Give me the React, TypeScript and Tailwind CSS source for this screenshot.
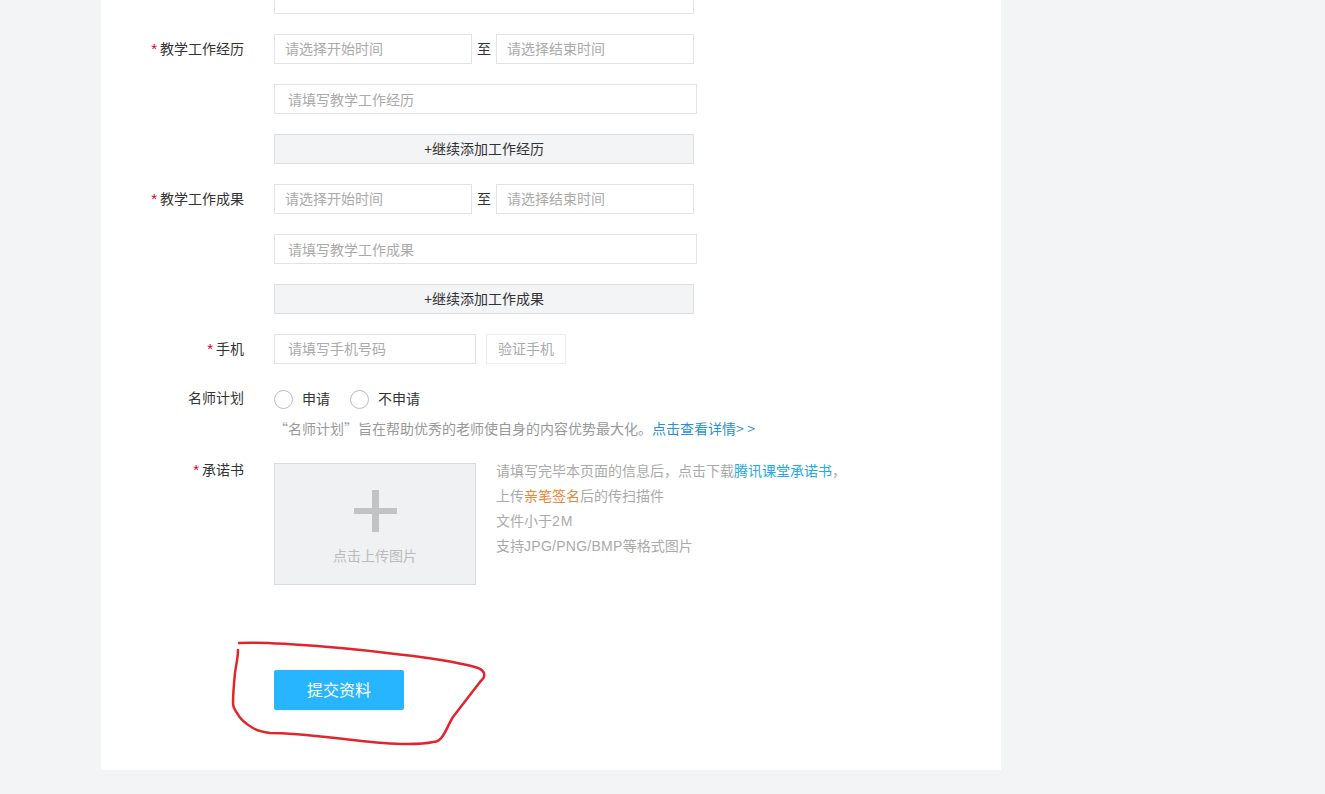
const fontCn = "font-['Liberation_Sans','Noto_Sans_CJK_SC',sans-serif]"

function Star() {
  return <span className="mr-[3px] text-[15px] text-[#d0021b]">*</span>
}

function Label({ text, required }: { text: string; required?: boolean }) {
  return (
    <div className="w-[143px] shrink-0 text-right text-[14px] leading-[29px] text-[#333]">
      {required && <Star />}
      {text}
    </div>
  )
}

function Box({ text, className }: { text: string; className: string }) {
  return (
    <div className={`h-[30px] border border-[#e1e3e6] text-[14px] text-[#aaa] ${className}`}>
      {text}
    </div>
  )
}

function WorkBlock({ title, what }: { title: string; what: string }) {
  return (
    <>
      <div className="flex">
        <Label text={title} required />
        <div className="ml-[30px] flex">
          <Box text="请选择开始时间" className="w-[198px] pl-[10px] leading-[29px]" />
          <div className="w-[24px] text-center text-[14px] leading-[30px] text-[#333]">至</div>
          <Box text="请选择结束时间" className="w-[198px] pl-[10px] leading-[29px]" />
        </div>
      </div>
      <div className="mt-[20px] ml-[173px]">
        <Box text={`请填写${what}`} className="w-[423px] pl-[13px] leading-[30px]" />
      </div>
      <div className="mt-[20px] ml-[173px] h-[30px] w-[420px] border border-[#dcdee1] bg-[#f3f4f6] text-center text-[14px] leading-[28px] text-[#333]">
        +继续添加{what.slice(2)}
      </div>
    </>
  )
}

function Radio({ text }: { text: string }) {
  return (
    <div className="flex items-center">
      <span className="h-[19px] w-[19px] rounded-full border border-[#b9bcc0] bg-white" />
      <span className="ml-[9px] text-[14px] text-[#333]">{text}</span>
    </div>
  )
}

export default function App() {
  return (
    <div className={`relative h-[794px] overflow-hidden bg-[#f3f4f6] ${fontCn}`}>
      <div className="ml-[101px] h-[770px] w-[900px] bg-white">
        <div className="ml-[173px] h-[14px] w-[420px] border border-t-0 border-[#e1e3e6]" />
        <div className="h-[20px]" />

        <WorkBlock title="教学工作经历" what="教学工作经历" />
        <div className="h-[20px]" />
        <WorkBlock title="教学工作成果" what="教学工作成果" />
        <div className="h-[20px]" />

        <div className="flex">
          <Label text="手机" required />
          <div className="ml-[30px] flex gap-[10px]">
            <Box text="请填写手机号码" className="w-[202px] pl-[13px] leading-[29px]" />
            <div className="h-[30px] w-[80px] border border-[#eceef0] text-center text-[14px] leading-[29px] text-[#aaa]">
              验证手机
            </div>
          </div>
        </div>

        <div className="mt-[20px] flex">
          <Label text="名师计划" />
          <div className="ml-[30px] flex h-[30px] items-center gap-[20px]">
            <Radio text="申请" />
            <Radio text="不申请" />
          </div>
        </div>
        <div className="ml-[173px] h-[30px] font-['Noto_Sans_CJK_SC',sans-serif] text-[14px] leading-[29px] text-[#999]">
          “名师计划”旨在帮助优秀的老师使自身的内容优势最大化。
          <span className="text-[#2a8fd8]">
            点击查看详情<span className="tracking-[3.5px]">&gt;&gt;</span>
          </span>
        </div>

        <div className="mt-[19px] flex">
          <div className="w-[143px] shrink-0 text-right text-[14px] leading-[14px] text-[#333]">
            <Star />承诺书
          </div>
          <div className="ml-[30px] flex h-[122px] w-[202px] shrink-0 flex-col items-center border border-[#d9dbde] bg-[#f0f1f3]">
            <svg width="43" height="42" viewBox="0 0 43 42" className="mt-[26px]">
              <path d="M18 0h7v18h18v6H25v18h-7V24H0v-6h18z" fill="#c2c3c5" />
            </svg>
            <div className="mt-[14px] text-[14px] text-[#bbb]">点击上传图片</div>
          </div>
          <div className="ml-[20px] -mt-[4px] text-[14px] leading-[25px] text-[#aaa]">
            <div>
              请填写完毕本页面的信息后，点击下载<span className="text-[#23a8e8]">腾讯课堂承诺书</span>，
            </div>
            <div>
              上传<span className="text-[#e8883a]">亲笔签名</span>后的传扫描件
            </div>
            <div>
              文件小于<span className="tracking-[1px]">2M</span>
            </div>
            <div>
              支持<span className="tracking-[0.27px]">JPG/PNG/BMP</span>等格式图片
            </div>
          </div>
        </div>

        <div className="mt-[85px] ml-[173px] flex h-[40px] w-[130px] items-center justify-center rounded-[2px] bg-[#28b5ff] pt-[2px] text-[16px] text-white">
          提交资料
        </div>
      </div>

      {/* red marker scribble drawn over the screenshot */}
      <svg width="1325" height="794" className="pointer-events-none absolute top-0 left-0">
        <path
          d="M239 643 C255 642 270 643 287 644 C320 646 355 649 387 653 C415 656 445 660 467 665 C475 667 482 668 484 673 C485 677 483 679 480 682 C470 695 462 705 453 717 C449 723 446 732 442 737 C439 741 436 742 433 742 C425 744 416 744 407 744 C390 744 370 742 353 740 C325 737 295 733 270 733 C262 732 258 731 253 728 C246 724 240 719 237 713 C234 709 233 706 233 703 C233 693 234 683 235 673 C236 665 238 658 238 650"
          fill="none"
          stroke="#e0262c"
          strokeWidth="2.5"
          strokeLinecap="round"
        />
      </svg>
    </div>
  )
}
